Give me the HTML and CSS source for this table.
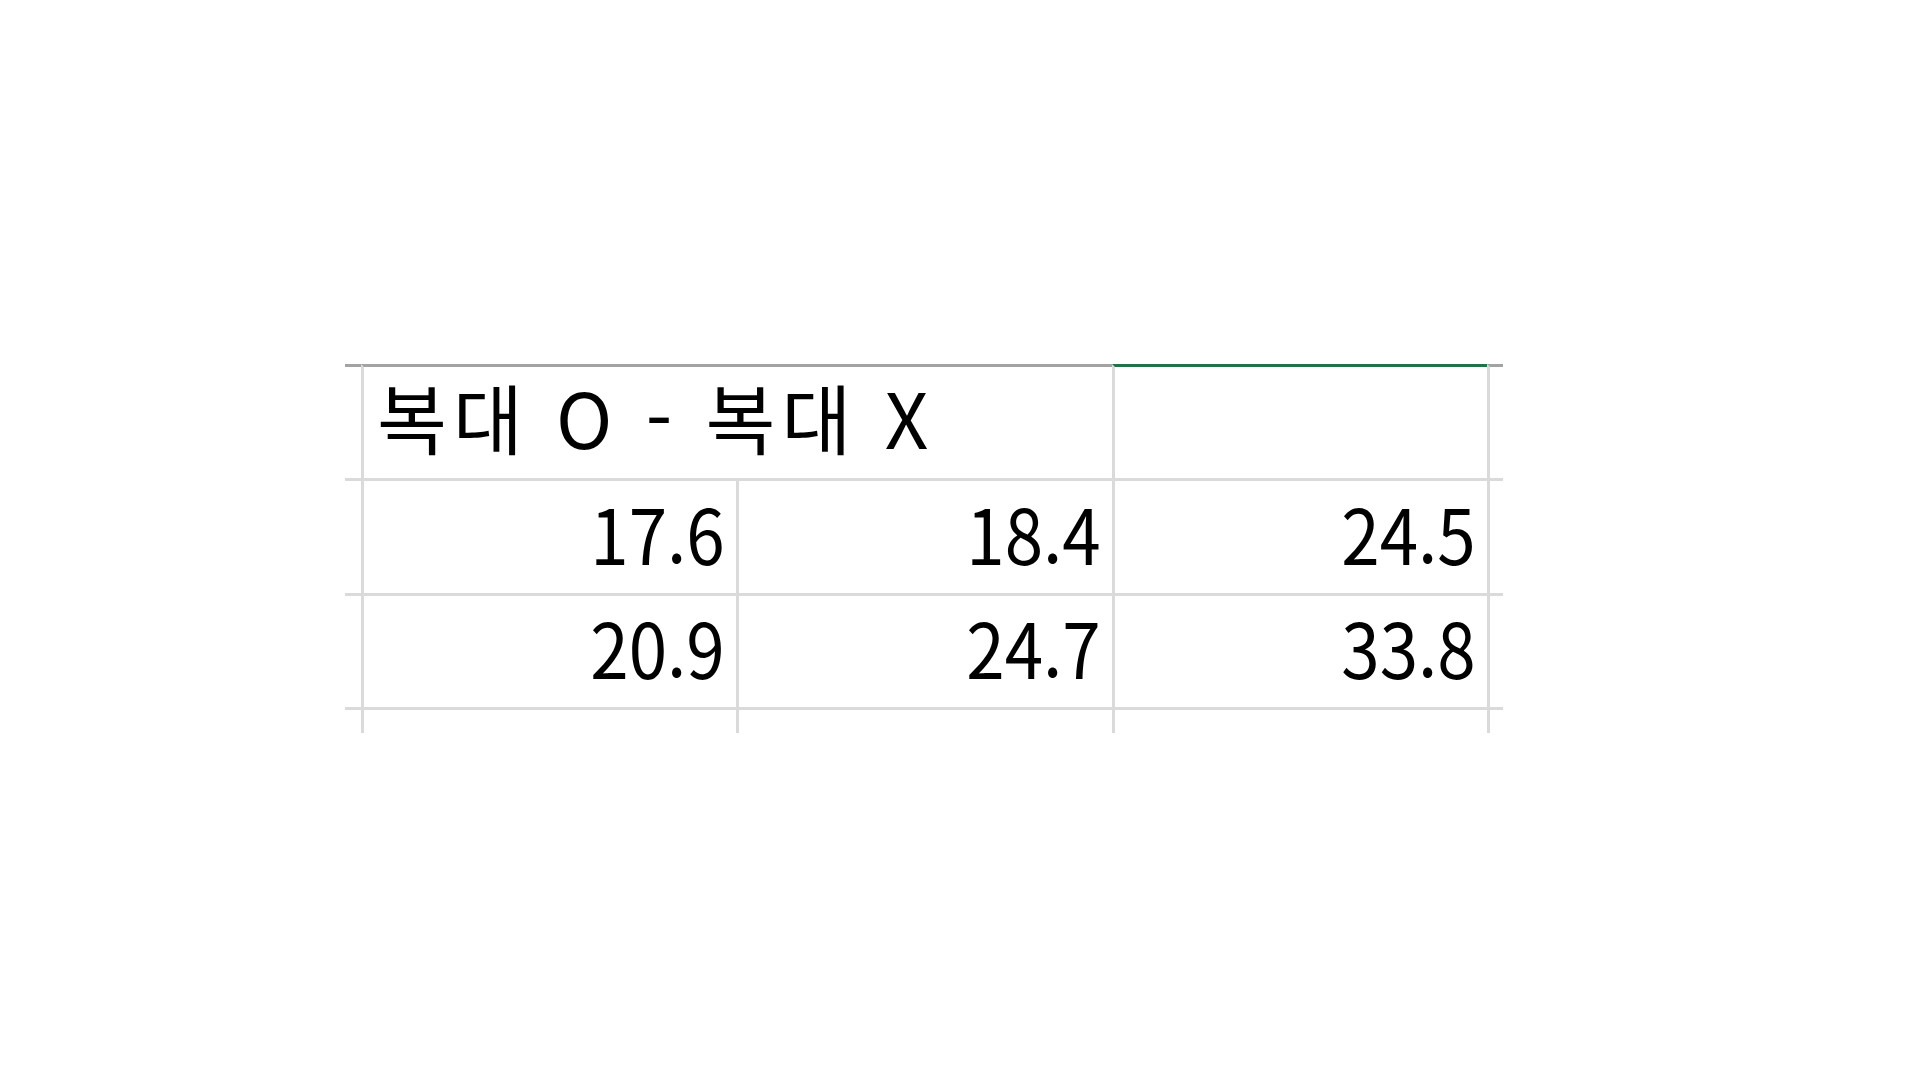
FILE: index.html
```html
<!DOCTYPE html>
<html lang="ko">
<head>
<meta charset="utf-8">
<title>Sheet</title>
<link rel="stylesheet" href="styles.css">
</head>
<body>
<div class="page">
  <div class="sheet">
    <div class="row row-head">
      <div class="stub"></div>
      <div class="cell span2 text">복대 O - 복대 X</div>
      <div class="cell selected"></div>
      <div class="cell stub"></div>
    </div>
    <div class="row row-2">
      <div class="stub"></div>
      <div class="cell num"><span class="val">17.6</span></div>
      <div class="cell num"><span class="val">18.4</span></div>
      <div class="cell num"><span class="val">24.5</span></div>
      <div class="cell stub"></div>
    </div>
    <div class="row row-3">
      <div class="stub"></div>
      <div class="cell num"><span class="val">20.9</span></div>
      <div class="cell num"><span class="val">24.7</span></div>
      <div class="cell num"><span class="val">33.8</span></div>
      <div class="cell stub"></div>
    </div>
    <div class="row row-tail">
      <div class="stub"></div>
      <div class="cell"></div>
      <div class="cell"></div>
      <div class="cell"></div>
      <div class="cell stub"></div>
    </div>
  </div>
</div>
</body>
</html>
```

FILE: styles.css
```css
* { box-sizing: border-box; }
html, body { margin: 0; padding: 0; background: #ffffff; }
body {
  width: 1920px;
  height: 1080px;
  overflow: hidden;
  font-family: "Noto Sans CJK KR", "Noto Sans", sans-serif;
  color: #000;
}
.page {
  padding: 364px 0 0 345px;
}
.sheet {
  display: flex;
  flex-direction: column;
  width: 1158px;
}
.row {
  display: grid;
  grid-template-columns: 16px 375px 376px 375px 16px;
  border-bottom: 3px solid #dadada;
}
.row-head { height: 117px; }
.row-2 { height: 115px; }
.row-3 { height: 114px; }
.row-tail { height: 23px; border-bottom: none; }

.row-head > div { border-top: 3px solid #a3a3a3; }
.row-head > .selected { border-top-color: #217346; }
.row-head > .span2 { grid-column: span 2; }

.cell {
  border-left: 3px solid #dadada;
  display: flex;
  align-items: flex-end;
  font-size: 76px;
  line-height: 1;
}
.text {
  padding: 0 0 24px 13px;
  white-space: nowrap;
  letter-spacing: 6px;
}
.num {
  justify-content: flex-end;
  padding: 0 11px 23px 0;
}
.val {
  display: inline-block;
  transform: scaleX(0.91);
  transform-origin: right bottom;
}
```
